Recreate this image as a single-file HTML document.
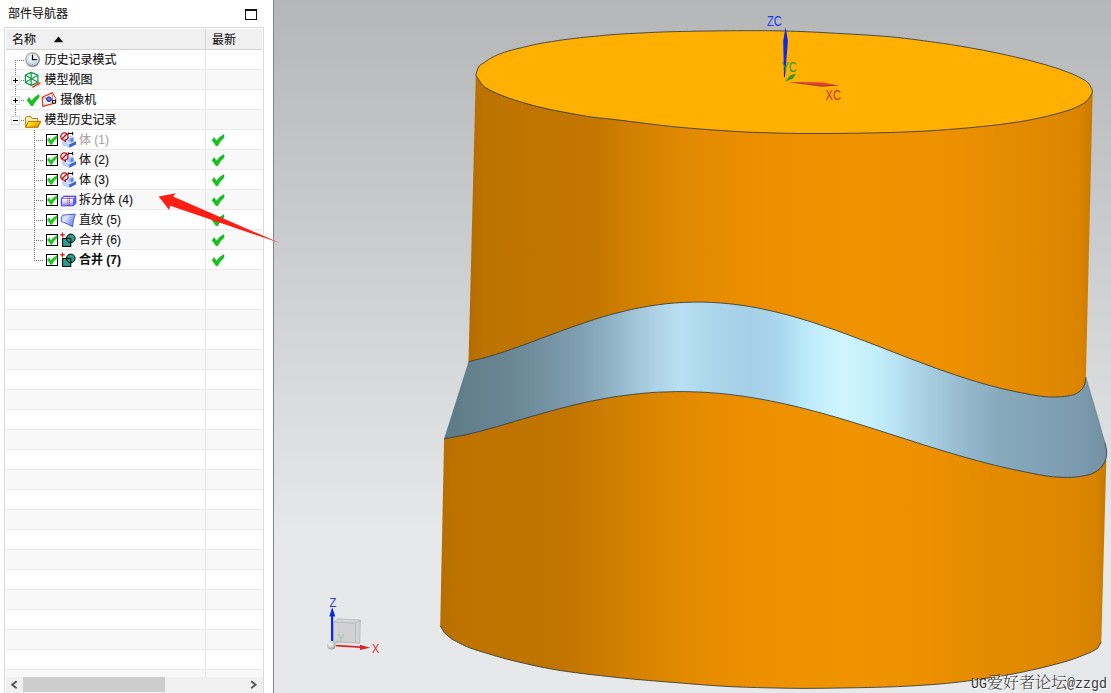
<!DOCTYPE html>
<html lang="zh-CN"><head><meta charset="utf-8"><title>部件导航器</title>
<style>
html,body{margin:0;padding:0;background:#fff;overflow:hidden}
body{width:1111px;height:693px;position:relative;font-family:"Liberation Sans","Noto Sans CJK SC",sans-serif}
svg{position:absolute;left:0;top:0;display:block}
.t{position:absolute;font-size:12px;line-height:17px;height:17px;color:#101010;white-space:nowrap;-webkit-text-stroke:0.1px #101010}
.g{color:#a4a4a4;-webkit-text-stroke-color:#a4a4a4}
.b{font-weight:bold}
.wm{position:absolute;left:971px;top:672.5px;font-family:"Liberation Serif","Noto Serif CJK SC",serif;font-weight:300;font-size:16px;line-height:20px;height:20px;color:#383838;white-space:nowrap;text-shadow:1px 1px 0 #fff}
.wm span{font-family:"Liberation Mono",monospace;font-size:13.33px;font-weight:400;display:inline-block;transform:scaleY(1.12);transform-origin:50% 80%}
</style></head><body>
<svg width="1111" height="693" viewBox="0 0 1111 693">
<rect x="0" y="0" width="273" height="693" fill="#fff"/>
<rect x="273" y="0" width="1" height="693" fill="#7f878e"/>

<defs>
<linearGradient id="bg" x1="0" y1="0" x2="0" y2="1">
<stop offset="0" stop-color="#b5b6b8"/><stop offset="0.78" stop-color="#e7e8ea"/><stop offset="1" stop-color="#e7e8ea"/>
</linearGradient>
<linearGradient id="gU" gradientUnits="userSpaceOnUse" x1="470" y1="0" x2="1093" y2="0"><stop offset="0.0000" stop-color="#b46d00"/><stop offset="0.0241" stop-color="#bd7300"/><stop offset="0.1124" stop-color="#c07500"/><stop offset="0.1990" stop-color="#c37700"/><stop offset="0.2568" stop-color="#d18000"/><stop offset="0.3371" stop-color="#df8800"/><stop offset="0.4286" stop-color="#ea8e00"/><stop offset="0.5297" stop-color="#ee9100"/><stop offset="0.6260" stop-color="#f09300"/><stop offset="0.7865" stop-color="#ec9000"/><stop offset="0.8507" stop-color="#e68c00"/><stop offset="0.9310" stop-color="#e08800"/><stop offset="0.9791" stop-color="#da8400"/><stop offset="0.9984" stop-color="#c87a00"/></linearGradient><linearGradient id="gL" gradientUnits="userSpaceOnUse" x1="440" y1="0" x2="1107" y2="0"><stop offset="0.0015" stop-color="#b66e00"/><stop offset="0.0225" stop-color="#be7300"/><stop offset="0.1874" stop-color="#c17500"/><stop offset="0.2399" stop-color="#cb7c00"/><stop offset="0.3148" stop-color="#da8500"/><stop offset="0.4063" stop-color="#e88d00"/><stop offset="0.5037" stop-color="#ee9100"/><stop offset="0.6147" stop-color="#f09300"/><stop offset="0.7346" stop-color="#ec9000"/><stop offset="0.8171" stop-color="#e48b00"/><stop offset="0.9295" stop-color="#df8800"/><stop offset="0.9820" stop-color="#d88300"/><stop offset="0.9970" stop-color="#c87a00"/></linearGradient><linearGradient id="gB" gradientUnits="userSpaceOnUse" x1="440" y1="0" x2="1111" y2="0"><stop offset="0.0075" stop-color="#5d7986"/><stop offset="0.0447" stop-color="#64808d"/><stop offset="0.1043" stop-color="#6a8694"/><stop offset="0.1565" stop-color="#7492a2"/><stop offset="0.2086" stop-color="#7f9fb2"/><stop offset="0.2683" stop-color="#96b8cb"/><stop offset="0.3130" stop-color="#abcfe2"/><stop offset="0.3577" stop-color="#b9e0f4"/><stop offset="0.4173" stop-color="#aad4ea"/><stop offset="0.4620" stop-color="#a5cfe7"/><stop offset="0.5067" stop-color="#aad6ee"/><stop offset="0.5440" stop-color="#bdeafb"/><stop offset="0.6006" stop-color="#cff6ff"/><stop offset="0.6557" stop-color="#c2ecfa"/><stop offset="0.7004" stop-color="#b0d8ea"/><stop offset="0.7601" stop-color="#9cc2d6"/><stop offset="0.7899" stop-color="#92b6ca"/><stop offset="0.8346" stop-color="#88aabd"/><stop offset="0.8942" stop-color="#81a2b6"/><stop offset="0.9538" stop-color="#7b9aad"/><stop offset="0.9911" stop-color="#7391a3"/></linearGradient>
</defs>
<rect x="274" y="0" width="837" height="693" fill="url(#bg)"/>
<path d="M444.1 438.4L440.2 625.8L444.6 633.1L451.9 639.2C454.3 640.4 462.1 644.6 466.5 646.5 C470.9 648.4 472.5 648.9 478.6 650.8 C484.7 652.7 494.8 655.9 502.9 658.1 C511.0 660.3 519.1 662.2 527.2 664.0 C535.3 665.8 543.4 667.6 551.5 669.1 C559.6 670.6 567.7 671.6 575.8 672.7 C583.9 673.8 592.0 674.7 600.1 675.6 C608.2 676.5 616.3 677.5 624.4 678.3 C632.5 679.1 640.6 679.8 648.7 680.5 C656.8 681.2 665.3 681.8 673.0 682.4 C680.7 683.0 685.8 683.5 695.0 684.2 C704.2 684.9 716.2 685.9 728.0 686.5 C739.8 687.1 753.3 687.5 766.0 687.8 C778.7 688.1 791.3 688.4 804.0 688.4 C816.7 688.4 829.3 688.2 842.0 688.0 C854.7 687.8 870.3 687.5 880.0 687.2 C889.7 687.0 893.5 686.8 900.0 686.5 C906.5 686.2 912.7 685.9 919.0 685.5 C925.3 685.1 931.7 684.7 938.0 684.2 C944.3 683.7 950.7 683.0 957.0 682.3 C963.3 681.6 969.7 680.7 976.0 679.8 C982.3 678.9 988.7 678.0 995.0 677.0 C1001.3 676.0 1007.7 675.0 1014.0 673.8 C1020.3 672.6 1026.7 671.2 1033.0 669.8 C1039.3 668.4 1045.6 666.9 1051.9 665.2 C1058.2 663.6 1064.6 662.0 1070.9 659.9 C1077.2 657.8 1086.7 653.9 1089.9 652.7L1097.5 648.5L1101.3 641.8L1106.3 460.0L1100.0 455.0L1090.0 474.4C1088.4 474.7 1084.3 475.8 1080.6 476.3 C1076.8 476.8 1072.8 477.4 1067.5 477.4 C1062.2 477.4 1054.9 477.0 1048.8 476.3 C1042.7 475.5 1036.9 474.2 1031.0 473.1 C1025.1 472.0 1019.2 470.8 1013.2 469.5 C1007.3 468.2 1001.4 466.8 995.4 465.4 C989.5 463.9 983.6 462.4 977.7 460.8 C971.7 459.2 965.8 457.5 959.9 455.8 C953.9 454.1 948.0 452.3 942.1 450.5 C936.2 448.7 930.2 446.8 924.3 445.0 C918.4 443.1 912.4 441.2 906.5 439.3 C900.6 437.4 894.7 435.5 888.7 433.6 C882.8 431.7 876.9 429.8 870.9 427.9 C865.0 426.0 859.1 424.1 853.2 422.3 C847.2 420.5 841.3 418.7 835.4 417.0 C829.4 415.3 823.5 413.6 817.6 412.0 C811.7 410.4 805.7 408.9 799.8 407.4 C793.9 406.0 787.9 404.6 782.0 403.3 C776.1 402.0 770.2 400.8 764.2 399.7 C758.3 398.6 752.4 397.6 746.4 396.7 C740.5 395.8 734.6 395.0 728.7 394.3 C722.7 393.7 716.8 393.1 710.9 392.7 C705.0 392.3 699.0 391.9 693.1 391.8 C687.2 391.6 681.2 391.5 675.3 391.6 C669.4 391.7 663.5 391.9 657.5 392.2 C651.6 392.5 645.7 393.0 639.7 393.6 C633.8 394.2 627.9 394.9 622.0 395.7 C616.0 396.5 610.1 397.5 604.2 398.6 C598.2 399.7 592.3 400.9 586.4 402.1 C580.5 403.4 574.5 404.8 568.6 406.3 C562.7 407.8 556.7 409.3 550.8 411.0 C544.9 412.6 539.0 414.3 533.0 416.0 C527.1 417.7 521.2 419.5 515.2 421.2 C509.3 423.0 503.4 424.8 497.5 426.5 C491.5 428.1 485.6 429.8 479.7 431.4 C473.7 432.9 467.8 434.4 461.9 435.6 C456.0 436.8 447.1 438.3 444.1 438.8Z" fill="url(#gL)"/>
<path d="M440.2 625.8L444.6 633.1L451.9 639.2C454.3 640.4 462.1 644.6 466.5 646.5 C470.9 648.4 472.5 648.9 478.6 650.8 C484.7 652.7 494.8 655.9 502.9 658.1 C511.0 660.3 519.1 662.2 527.2 664.0 C535.3 665.8 543.4 667.6 551.5 669.1 C559.6 670.6 567.7 671.6 575.8 672.7 C583.9 673.8 592.0 674.7 600.1 675.6 C608.2 676.5 616.3 677.5 624.4 678.3 C632.5 679.1 640.6 679.8 648.7 680.5 C656.8 681.2 665.3 681.8 673.0 682.4 C680.7 683.0 685.8 683.5 695.0 684.2 C704.2 684.9 716.2 685.9 728.0 686.5 C739.8 687.1 753.3 687.5 766.0 687.8 C778.7 688.1 791.3 688.4 804.0 688.4 C816.7 688.4 829.3 688.2 842.0 688.0 C854.7 687.8 870.3 687.5 880.0 687.2 C889.7 687.0 893.5 686.8 900.0 686.5 C906.5 686.2 912.7 685.9 919.0 685.5 C925.3 685.1 931.7 684.7 938.0 684.2 C944.3 683.7 950.7 683.0 957.0 682.3 C963.3 681.6 969.7 680.7 976.0 679.8 C982.3 678.9 988.7 678.0 995.0 677.0 C1001.3 676.0 1007.7 675.0 1014.0 673.8 C1020.3 672.6 1026.7 671.2 1033.0 669.8 C1039.3 668.4 1045.6 666.9 1051.9 665.2 C1058.2 663.6 1064.6 662.0 1070.9 659.9 C1077.2 657.8 1086.7 653.9 1089.9 652.7L1097.5 648.5L1101.3 641.8" fill="none" stroke="#26323c" stroke-width="0.8"/>
<path d="M468.5 361.7C471.5 361.0 480.5 358.9 486.5 357.2 C492.5 355.6 498.5 353.6 504.5 351.6 C510.5 349.6 516.5 347.5 522.5 345.3 C528.6 343.1 534.6 340.8 540.6 338.6 C546.6 336.3 552.6 334.1 558.6 331.9 C564.6 329.7 570.6 327.5 576.6 325.4 C582.6 323.3 588.6 321.3 594.6 319.4 C600.6 317.5 606.6 315.7 612.6 314.1 C618.6 312.5 624.6 311.0 630.6 309.6 C636.6 308.3 642.7 307.1 648.7 306.2 C654.7 305.2 660.7 304.3 666.7 303.7 C672.7 303.1 678.7 302.6 684.7 302.4 C690.7 302.1 696.7 302.0 702.7 302.1 C708.7 302.2 714.7 302.5 720.7 303.0 C726.7 303.4 732.7 304.1 738.7 304.9 C744.7 305.7 750.7 306.7 756.8 307.8 C762.8 309.0 768.8 310.3 774.8 311.7 C780.8 313.1 786.8 314.7 792.8 316.4 C798.8 318.1 804.8 319.9 810.8 321.8 C816.8 323.7 822.8 325.7 828.8 327.8 C834.8 329.9 840.8 332.1 846.8 334.3 C852.8 336.5 858.8 338.8 864.8 341.1 C870.8 343.4 876.9 345.7 882.9 348.0 C888.9 350.4 894.9 352.7 900.9 355.0 C906.9 357.3 912.9 359.7 918.9 361.9 C924.9 364.2 930.9 366.4 936.9 368.6 C942.9 370.7 948.9 372.8 954.9 374.8 C960.9 376.8 966.9 378.8 972.9 380.6 C978.9 382.4 984.9 384.2 991.0 385.8 C997.0 387.4 1003.0 388.9 1009.0 390.2 C1015.0 391.6 1021.0 392.8 1027.0 393.9 C1033.0 395.0 1039.8 396.2 1045.0 396.7 C1050.2 397.2 1053.9 397.1 1058.1 396.9 C1062.3 396.7 1067.0 396.3 1070.3 395.6 C1073.6 394.9 1075.8 394.0 1077.8 392.8 C1079.8 391.6 1081.3 390.1 1082.5 388.5 C1083.7 386.9 1084.3 385.3 1084.9 383.4 C1085.5 381.5 1085.7 378.3 1085.9 377.3C1086.9 380.7 1090.0 391.0 1091.9 397.5 C1093.8 404.0 1095.8 410.4 1097.5 416.3 C1099.2 422.2 1101.0 428.7 1102.2 433.1 C1103.5 437.5 1104.3 439.7 1105.0 442.5 C1105.7 445.3 1106.2 447.8 1106.5 450.0 C1106.8 452.2 1106.8 453.7 1106.5 455.6 C1106.2 457.5 1105.7 459.6 1105.0 461.3 C1104.3 463.0 1103.5 464.3 1102.2 465.9 C1101.0 467.4 1099.5 469.2 1097.5 470.6 C1095.5 472.0 1092.8 473.4 1090.0 474.4 C1087.2 475.3 1084.3 475.8 1080.6 476.3 C1076.8 476.8 1072.8 477.4 1067.5 477.4 C1062.2 477.4 1054.9 477.0 1048.8 476.3 C1042.7 475.5 1036.9 474.2 1031.0 473.1 C1025.1 472.0 1019.2 470.8 1013.2 469.5 C1007.3 468.2 1001.4 466.8 995.4 465.4 C989.5 463.9 983.6 462.4 977.7 460.8 C971.7 459.2 965.8 457.5 959.9 455.8 C953.9 454.1 948.0 452.3 942.1 450.5 C936.2 448.7 930.2 446.8 924.3 445.0 C918.4 443.1 912.4 441.2 906.5 439.3 C900.6 437.4 894.7 435.5 888.7 433.6 C882.8 431.7 876.9 429.8 870.9 427.9 C865.0 426.0 859.1 424.1 853.2 422.3 C847.2 420.5 841.3 418.7 835.4 417.0 C829.4 415.3 823.5 413.6 817.6 412.0 C811.7 410.4 805.7 408.9 799.8 407.4 C793.9 406.0 787.9 404.6 782.0 403.3 C776.1 402.0 770.2 400.8 764.2 399.7 C758.3 398.6 752.4 397.6 746.4 396.7 C740.5 395.8 734.6 395.0 728.7 394.3 C722.7 393.7 716.8 393.1 710.9 392.7 C705.0 392.3 699.0 391.9 693.1 391.8 C687.2 391.6 681.2 391.5 675.3 391.6 C669.4 391.7 663.5 391.9 657.5 392.2 C651.6 392.5 645.7 393.0 639.7 393.6 C633.8 394.2 627.9 394.9 622.0 395.7 C616.0 396.5 610.1 397.5 604.2 398.6 C598.2 399.7 592.3 400.9 586.4 402.1 C580.5 403.4 574.5 404.8 568.6 406.3 C562.7 407.8 556.7 409.3 550.8 411.0 C544.9 412.6 539.0 414.3 533.0 416.0 C527.1 417.7 521.2 419.5 515.2 421.2 C509.3 423.0 503.4 424.8 497.5 426.5 C491.5 428.1 485.6 429.8 479.7 431.4 C473.7 432.9 467.8 434.4 461.9 435.6 C456.0 436.8 447.1 438.3 444.1 438.8Z" fill="url(#gB)"/>
<path d="M444.1 438.8C447.1 438.3 456.0 436.8 461.9 435.6 C467.8 434.4 473.7 432.9 479.7 431.4 C485.6 429.8 491.5 428.1 497.5 426.5 C503.4 424.8 509.3 423.0 515.2 421.2 C521.2 419.5 527.1 417.7 533.0 416.0 C539.0 414.3 544.9 412.6 550.8 411.0 C556.7 409.3 562.7 407.8 568.6 406.3 C574.5 404.8 580.5 403.4 586.4 402.1 C592.3 400.9 598.2 399.7 604.2 398.6 C610.1 397.5 616.0 396.5 622.0 395.7 C627.9 394.9 633.8 394.2 639.7 393.6 C645.7 393.0 651.6 392.5 657.5 392.2 C663.5 391.9 669.4 391.7 675.3 391.6 C681.2 391.5 687.2 391.6 693.1 391.8 C699.0 391.9 705.0 392.3 710.9 392.7 C716.8 393.1 722.7 393.7 728.7 394.3 C734.6 395.0 740.5 395.8 746.4 396.7 C752.4 397.6 758.3 398.6 764.2 399.7 C770.2 400.8 776.1 402.0 782.0 403.3 C787.9 404.6 793.9 406.0 799.8 407.4 C805.7 408.9 811.7 410.4 817.6 412.0 C823.5 413.6 829.4 415.3 835.4 417.0 C841.3 418.7 847.2 420.5 853.2 422.3 C859.1 424.1 865.0 426.0 870.9 427.9 C876.9 429.8 882.8 431.7 888.7 433.6 C894.7 435.5 900.6 437.4 906.5 439.3 C912.4 441.2 918.4 443.1 924.3 445.0 C930.2 446.8 936.2 448.7 942.1 450.5 C948.0 452.3 953.9 454.1 959.9 455.8 C965.8 457.5 971.7 459.2 977.7 460.8 C983.6 462.4 989.5 463.9 995.4 465.4 C1001.4 466.8 1007.3 468.2 1013.2 469.5 C1019.2 470.8 1025.1 472.0 1031.0 473.1 C1036.9 474.2 1042.7 475.5 1048.8 476.3 C1054.9 477.0 1062.2 477.4 1067.5 477.4 C1072.8 477.4 1076.8 476.8 1080.6 476.3 C1084.3 475.8 1087.2 475.3 1090.0 474.4 C1092.8 473.4 1095.5 472.0 1097.5 470.6 C1099.5 469.2 1101.0 467.4 1102.2 465.9 C1103.5 464.3 1104.3 463.0 1105.0 461.3 C1105.7 459.6 1106.2 457.5 1106.5 455.6 C1106.8 453.7 1106.8 452.2 1106.5 450.0 C1106.2 447.8 1105.2 443.8 1105.0 442.5" fill="none" stroke="#26323c" stroke-width="0.8"/>
<path d="M1105.0 442.5C1104.5 440.9 1103.5 437.5 1102.2 433.1 C1101.0 428.7 1099.2 422.2 1097.5 416.3 C1095.8 410.4 1093.8 404.0 1091.9 397.5 C1090.0 391.0 1086.9 380.7 1085.9 377.3" fill="none" stroke="#26323c" stroke-width="0.5" stroke-opacity="0.5"/>
<path d="M475.8 75.2L468.5 361.7C471.5 361.0 480.5 358.9 486.5 357.2 C492.5 355.6 498.5 353.6 504.5 351.6 C510.5 349.6 516.5 347.5 522.5 345.3 C528.6 343.1 534.6 340.8 540.6 338.6 C546.6 336.3 552.6 334.1 558.6 331.9 C564.6 329.7 570.6 327.5 576.6 325.4 C582.6 323.3 588.6 321.3 594.6 319.4 C600.6 317.5 606.6 315.7 612.6 314.1 C618.6 312.5 624.6 311.0 630.6 309.6 C636.6 308.3 642.7 307.1 648.7 306.2 C654.7 305.2 660.7 304.3 666.7 303.7 C672.7 303.1 678.7 302.6 684.7 302.4 C690.7 302.1 696.7 302.0 702.7 302.1 C708.7 302.2 714.7 302.5 720.7 303.0 C726.7 303.4 732.7 304.1 738.7 304.9 C744.7 305.7 750.7 306.7 756.8 307.8 C762.8 309.0 768.8 310.3 774.8 311.7 C780.8 313.1 786.8 314.7 792.8 316.4 C798.8 318.1 804.8 319.9 810.8 321.8 C816.8 323.7 822.8 325.7 828.8 327.8 C834.8 329.9 840.8 332.1 846.8 334.3 C852.8 336.5 858.8 338.8 864.8 341.1 C870.8 343.4 876.9 345.7 882.9 348.0 C888.9 350.4 894.9 352.7 900.9 355.0 C906.9 357.3 912.9 359.7 918.9 361.9 C924.9 364.2 930.9 366.4 936.9 368.6 C942.9 370.7 948.9 372.8 954.9 374.8 C960.9 376.8 966.9 378.8 972.9 380.6 C978.9 382.4 984.9 384.2 991.0 385.8 C997.0 387.4 1003.0 388.9 1009.0 390.2 C1015.0 391.6 1021.0 392.8 1027.0 393.9 C1033.0 395.0 1039.8 396.2 1045.0 396.7 C1050.2 397.2 1053.9 397.1 1058.1 396.9 C1062.3 396.7 1067.0 396.3 1070.3 395.6 C1073.6 394.9 1075.8 394.0 1077.8 392.8 C1079.8 391.6 1081.3 390.1 1082.5 388.5 C1083.7 386.9 1084.3 385.3 1084.9 383.4 C1085.5 381.5 1085.7 378.3 1085.9 377.3L1092.7 91.8L780.0 80.0Z" fill="url(#gU)"/>
<path d="M468.5 361.7C471.5 361.0 480.5 358.9 486.5 357.2 C492.5 355.6 498.5 353.6 504.5 351.6 C510.5 349.6 516.5 347.5 522.5 345.3 C528.6 343.1 534.6 340.8 540.6 338.6 C546.6 336.3 552.6 334.1 558.6 331.9 C564.6 329.7 570.6 327.5 576.6 325.4 C582.6 323.3 588.6 321.3 594.6 319.4 C600.6 317.5 606.6 315.7 612.6 314.1 C618.6 312.5 624.6 311.0 630.6 309.6 C636.6 308.3 642.7 307.1 648.7 306.2 C654.7 305.2 660.7 304.3 666.7 303.7 C672.7 303.1 678.7 302.6 684.7 302.4 C690.7 302.1 696.7 302.0 702.7 302.1 C708.7 302.2 714.7 302.5 720.7 303.0 C726.7 303.4 732.7 304.1 738.7 304.9 C744.7 305.7 750.7 306.7 756.8 307.8 C762.8 309.0 768.8 310.3 774.8 311.7 C780.8 313.1 786.8 314.7 792.8 316.4 C798.8 318.1 804.8 319.9 810.8 321.8 C816.8 323.7 822.8 325.7 828.8 327.8 C834.8 329.9 840.8 332.1 846.8 334.3 C852.8 336.5 858.8 338.8 864.8 341.1 C870.8 343.4 876.9 345.7 882.9 348.0 C888.9 350.4 894.9 352.7 900.9 355.0 C906.9 357.3 912.9 359.7 918.9 361.9 C924.9 364.2 930.9 366.4 936.9 368.6 C942.9 370.7 948.9 372.8 954.9 374.8 C960.9 376.8 966.9 378.8 972.9 380.6 C978.9 382.4 984.9 384.2 991.0 385.8 C997.0 387.4 1003.0 388.9 1009.0 390.2 C1015.0 391.6 1021.0 392.8 1027.0 393.9 C1033.0 395.0 1039.8 396.2 1045.0 396.7 C1050.2 397.2 1053.9 397.1 1058.1 396.9 C1062.3 396.7 1067.0 396.3 1070.3 395.6 C1073.6 394.9 1075.8 394.0 1077.8 392.8 C1079.8 391.6 1081.3 390.1 1082.5 388.5 C1083.7 386.9 1084.3 385.3 1084.9 383.4 C1085.5 381.5 1085.7 378.3 1085.9 377.3" fill="none" stroke="#26323c" stroke-width="0.8"/>
<path d="M475.8 75.2C476.3 73.8 477.4 68.9 478.7 66.8 C480.0 64.7 481.3 64.5 483.8 62.8 C486.3 61.1 489.8 58.5 493.9 56.5 C498.0 54.5 503.5 52.5 508.3 51.0 C513.1 49.5 517.9 48.6 522.7 47.4 C527.5 46.2 532.4 45.0 537.2 44.0 C542.0 43.0 546.8 42.4 551.6 41.6 C556.4 40.8 561.2 40.0 566.0 39.4 C570.8 38.8 575.6 38.2 580.4 37.7 C585.2 37.2 589.1 36.8 594.9 36.3 C600.7 35.8 606.6 35.0 615.0 34.4 C623.4 33.8 634.8 33.3 645.0 32.8 C655.2 32.3 660.8 32.0 676.2 31.6 C691.6 31.2 719.3 30.8 737.4 30.7 C755.5 30.6 769.5 30.6 784.8 31.0 C800.1 31.4 811.6 31.9 829.2 32.9 C846.8 33.9 871.9 35.1 890.4 36.8 C908.9 38.5 929.3 41.6 940.0 43.0 C950.7 44.4 949.6 44.4 954.4 45.2 C959.2 46.0 964.1 46.8 968.9 47.6 C973.7 48.4 978.5 49.3 983.3 50.2 C988.1 51.1 992.9 52.1 997.7 53.1 C1002.5 54.1 1007.4 55.2 1012.2 56.3 C1017.0 57.4 1021.8 58.4 1026.6 59.6 C1031.4 60.8 1036.2 62.1 1041.0 63.5 C1045.8 64.9 1050.6 66.2 1055.4 67.8 C1060.2 69.4 1066.1 71.5 1069.9 73.0 C1073.8 74.5 1075.6 75.4 1078.5 76.9 C1081.4 78.4 1085.2 80.2 1087.2 81.9 C1089.2 83.6 1089.9 85.3 1090.8 87.0 C1091.7 88.7 1092.4 91.0 1092.7 91.8C1092.2 92.8 1090.8 95.9 1089.4 97.8 C1088.0 99.7 1086.3 101.4 1084.3 102.9 C1082.2 104.4 1079.5 105.7 1077.1 106.8 C1074.7 107.9 1073.5 108.6 1069.9 109.8 C1066.3 111.0 1060.2 112.8 1055.4 114.1 C1050.6 115.4 1045.8 116.5 1041.0 117.6 C1036.2 118.7 1031.4 119.7 1026.6 120.6 C1021.8 121.5 1017.0 122.1 1012.2 122.8 C1007.4 123.5 1002.5 124.2 997.7 124.8 C992.9 125.4 988.1 125.9 983.3 126.4 C978.5 126.9 973.7 127.4 968.9 127.8 C964.1 128.2 959.2 128.6 954.4 129.0 C949.6 129.4 945.6 129.7 940.0 130.1 C934.4 130.5 929.3 130.9 921.0 131.3 C912.7 131.7 900.6 132.2 890.4 132.5 C880.2 132.8 870.0 133.0 859.8 133.2 C849.6 133.4 839.4 133.4 829.2 133.5 C819.0 133.6 808.8 133.6 798.6 133.5 C788.4 133.4 778.2 133.1 768.0 132.8 C757.8 132.5 747.6 132.2 737.4 131.6 C727.2 131.0 717.0 130.3 706.8 129.5 C696.6 128.7 686.4 128.0 676.2 127.0 C666.0 126.0 655.8 124.6 645.6 123.4 C635.4 122.2 623.5 120.6 615.0 119.6 C606.5 118.6 600.7 118.1 594.9 117.4 C589.1 116.7 585.2 116.0 580.4 115.2 C575.6 114.4 570.8 113.5 566.0 112.6 C561.2 111.7 556.4 110.8 551.6 109.8 C546.8 108.8 542.0 107.7 537.2 106.5 C532.4 105.3 527.5 103.9 522.7 102.5 C517.9 101.1 513.1 99.6 508.3 97.9 C503.5 96.2 498.0 94.0 493.9 92.1 C489.8 90.2 486.2 88.2 483.8 86.3 C481.4 84.4 480.7 82.4 479.4 80.6 C478.1 78.8 476.4 76.1 475.8 75.2Z" fill="#ffb000" stroke="#26323c" stroke-width="0.8"/>


<g font-family="'Liberation Sans',sans-serif" font-size="14">
<path d="M785.6 26.9 L787.9 41 L785 77.2 L784 77.2 L783.2 41 Z" fill="#0a28f0"/>
<path d="M785 81.7 L790 75.5 L796 73.6 L793 78.5 Z" fill="#2a9a2a"/>
<path d="M788.4 82.2 L820 83 L839.2 85.6 L822 86.8 Z" fill="#8a4a30"/>
<path d="M788.4 82 L822 82.6 L839.2 85.4 L820 85.4 Z" fill="#e83a3a"/>
<text x="767" y="25.8" fill="#1c3cf0" textLength="15" lengthAdjust="spacingAndGlyphs">ZC</text>
<text x="781.4" y="71.8" fill="#2a9a2a" textLength="15.4" lengthAdjust="spacingAndGlyphs">YC</text>
<text x="825.5" y="99.8" fill="#d03030" textLength="15.4" lengthAdjust="spacingAndGlyphs">XC</text>
</g>


<defs><radialGradient id="sph" cx="0.4" cy="0.35" r="0.7"><stop offset="0" stop-color="#ffffff"/><stop offset="0.6" stop-color="#c8c8c8"/><stop offset="1" stop-color="#8a8a8a"/></radialGradient></defs>
<g font-family="'Liberation Sans',sans-serif" font-size="12.3">
<path d="M337.1 619 L360.2 620.2 L359.6 643.3 L337.1 641" fill="#cfd0d1" fill-opacity="0.5" stroke="#bcbdbe" stroke-width="0.7"/>
<path d="M333.7 621.9 L355.6 623 L355.6 642.7 L333.7 642.7 Z" fill="#c9cacb" fill-opacity="0.6" stroke="#b6b7b8" stroke-width="0.8"/>
<path d="M333.7 621.9 L337.1 619 L360.2 620.2 L355.6 623 Z" fill="#d6d7d8" fill-opacity="0.7" stroke="#b9babb" stroke-width="0.8"/>
<path d="M355.6 623 L360.2 620.2 L359.6 643.3 L355.6 642.7 Z" fill="#cfd0d1" fill-opacity="0.7" stroke="#b9babb" stroke-width="0.8"/>
<text x="337.6" y="642" fill="#9cc8a2" font-size="10">Y</text>
<path d="M334 643.6 L338.4 640.4" stroke="#9cc8a2" stroke-width="1.2"/>
<rect x="331" y="615" width="2.2" height="27" fill="#0a28e8"/>
<path d="M332.2 607.2 L335.3 616.4 L329.3 616.4 Z" fill="#0a28e8"/>
<path d="M336 644.7 L361 646.3 L361 648 L336 646.4 Z" fill="#d62828"/>
<path d="M360 644.8 L370.2 647.8 L360 650 Z" fill="#d62828"/>
<circle cx="331.3" cy="645.2" r="4.4" fill="url(#sph)"/>
<text x="329.4" y="606.7" fill="#1c3cf0" textLength="6.8" lengthAdjust="spacingAndGlyphs">Z</text>
<text x="371.9" y="653" fill="#d03030" textLength="7.2" lengthAdjust="spacingAndGlyphs">X</text>
</g>

<g shape-rendering="crispEdges"><rect x="6" y="50" width="256" height="19" fill="#ffffff"/><rect x="6" y="69" width="256" height="1" fill="#e9e9e9"/><rect x="6" y="70" width="256" height="19" fill="#f8f8f8"/><rect x="6" y="89" width="256" height="1" fill="#e9e9e9"/><rect x="6" y="90" width="256" height="19" fill="#ffffff"/><rect x="6" y="109" width="256" height="1" fill="#e9e9e9"/><rect x="6" y="110" width="256" height="19" fill="#f8f8f8"/><rect x="6" y="129" width="256" height="1" fill="#e9e9e9"/><rect x="6" y="130" width="256" height="19" fill="#ffffff"/><rect x="6" y="149" width="256" height="1" fill="#e9e9e9"/><rect x="6" y="150" width="256" height="19" fill="#f8f8f8"/><rect x="6" y="169" width="256" height="1" fill="#e9e9e9"/><rect x="6" y="170" width="256" height="19" fill="#ffffff"/><rect x="6" y="189" width="256" height="1" fill="#e9e9e9"/><rect x="6" y="190" width="256" height="19" fill="#f8f8f8"/><rect x="6" y="209" width="256" height="1" fill="#e9e9e9"/><rect x="6" y="210" width="256" height="19" fill="#ffffff"/><rect x="6" y="229" width="256" height="1" fill="#e9e9e9"/><rect x="6" y="230" width="256" height="19" fill="#f8f8f8"/><rect x="6" y="249" width="256" height="1" fill="#e9e9e9"/><rect x="6" y="250" width="256" height="19" fill="#ffffff"/><rect x="6" y="269" width="256" height="1" fill="#e9e9e9"/><rect x="6" y="270" width="256" height="19" fill="#f8f8f8"/><rect x="6" y="289" width="256" height="1" fill="#e9e9e9"/><rect x="6" y="290" width="256" height="19" fill="#ffffff"/><rect x="6" y="309" width="256" height="1" fill="#e9e9e9"/><rect x="6" y="310" width="256" height="19" fill="#f8f8f8"/><rect x="6" y="329" width="256" height="1" fill="#e9e9e9"/><rect x="6" y="330" width="256" height="19" fill="#ffffff"/><rect x="6" y="349" width="256" height="1" fill="#e9e9e9"/><rect x="6" y="350" width="256" height="19" fill="#f8f8f8"/><rect x="6" y="369" width="256" height="1" fill="#e9e9e9"/><rect x="6" y="370" width="256" height="19" fill="#ffffff"/><rect x="6" y="389" width="256" height="1" fill="#e9e9e9"/><rect x="6" y="390" width="256" height="19" fill="#f8f8f8"/><rect x="6" y="409" width="256" height="1" fill="#e9e9e9"/><rect x="6" y="410" width="256" height="19" fill="#ffffff"/><rect x="6" y="429" width="256" height="1" fill="#e9e9e9"/><rect x="6" y="430" width="256" height="19" fill="#f8f8f8"/><rect x="6" y="449" width="256" height="1" fill="#e9e9e9"/><rect x="6" y="450" width="256" height="19" fill="#ffffff"/><rect x="6" y="469" width="256" height="1" fill="#e9e9e9"/><rect x="6" y="470" width="256" height="19" fill="#f8f8f8"/><rect x="6" y="489" width="256" height="1" fill="#e9e9e9"/><rect x="6" y="490" width="256" height="19" fill="#ffffff"/><rect x="6" y="509" width="256" height="1" fill="#e9e9e9"/><rect x="6" y="510" width="256" height="19" fill="#f8f8f8"/><rect x="6" y="529" width="256" height="1" fill="#e9e9e9"/><rect x="6" y="530" width="256" height="19" fill="#ffffff"/><rect x="6" y="549" width="256" height="1" fill="#e9e9e9"/><rect x="6" y="550" width="256" height="19" fill="#f8f8f8"/><rect x="6" y="569" width="256" height="1" fill="#e9e9e9"/><rect x="6" y="570" width="256" height="19" fill="#ffffff"/><rect x="6" y="589" width="256" height="1" fill="#e9e9e9"/><rect x="6" y="590" width="256" height="19" fill="#f8f8f8"/><rect x="6" y="609" width="256" height="1" fill="#e9e9e9"/><rect x="6" y="610" width="256" height="19" fill="#ffffff"/><rect x="6" y="629" width="256" height="1" fill="#e9e9e9"/><rect x="6" y="630" width="256" height="19" fill="#f8f8f8"/><rect x="6" y="649" width="256" height="1" fill="#e9e9e9"/><rect x="6" y="650" width="256" height="19" fill="#ffffff"/><rect x="6" y="669" width="256" height="1" fill="#e9e9e9"/><rect x="6" y="670" width="256" height="7" fill="#f8f8f8"/><rect x="205" y="50" width="1" height="627" fill="#e6e6e6"/><rect x="6" y="29" width="256" height="20" fill="#f0f0f0"/><rect x="6" y="49" width="256" height="1" fill="#d4d4d4"/><rect x="205" y="29" width="1" height="20" fill="#d2d2d2"/><rect x="4" y="27" width="260" height="1" fill="#d9d9d9"/><rect x="4" y="27" width="1" height="666" fill="#d9d9d9"/><rect x="263" y="27" width="1" height="666" fill="#d9d9d9"/><rect x="245" y="9" width="12" height="2" fill="#111"/><rect x="245" y="9" width="1" height="11" fill="#111"/><rect x="256" y="9" width="1" height="11" fill="#111"/><rect x="245" y="19" width="12" height="1" fill="#111"/><g stroke="#777" stroke-width="1" stroke-dasharray="1 1" fill="none"><path d="M15.5 60 V76"/><path d="M15.5 86 V96"/><path d="M15.5 106 V116"/><path d="M17 60.5 H24"/><path d="M21 80.5 H24"/><path d="M21 100.5 H24"/><path d="M21 120.5 H24"/><path d="M34.5 130 V261"/><path d="M36 140.5 H43"/><path d="M36 160.5 H43"/><path d="M36 180.5 H43"/><path d="M36 200.5 H43"/><path d="M36 220.5 H43"/><path d="M36 240.5 H43"/><path d="M36 260.5 H43"/></g><rect x="11" y="76" width="9" height="9" fill="#dadada"/><rect x="12" y="77" width="7" height="7" fill="#fff"/><rect x="13" y="80" width="5" height="1" fill="#000"/><rect x="15" y="78" width="1" height="5" fill="#000"/><rect x="11" y="96" width="9" height="9" fill="#dadada"/><rect x="12" y="97" width="7" height="7" fill="#fff"/><rect x="13" y="100" width="5" height="1" fill="#000"/><rect x="15" y="98" width="1" height="5" fill="#000"/><rect x="11" y="116" width="9" height="9" fill="#dadada"/><rect x="12" y="117" width="7" height="7" fill="#fff"/><rect x="13" y="120" width="5" height="1" fill="#000"/><rect x="46" y="134" width="12" height="12" fill="#000"/><rect x="47" y="135" width="10" height="10" fill="#fff"/><rect x="46" y="154" width="12" height="12" fill="#000"/><rect x="47" y="155" width="10" height="10" fill="#fff"/><rect x="46" y="174" width="12" height="12" fill="#000"/><rect x="47" y="175" width="10" height="10" fill="#fff"/><rect x="46" y="194" width="12" height="12" fill="#000"/><rect x="47" y="195" width="10" height="10" fill="#fff"/><rect x="46" y="214" width="12" height="12" fill="#000"/><rect x="47" y="215" width="10" height="10" fill="#fff"/><rect x="46" y="234" width="12" height="12" fill="#000"/><rect x="47" y="235" width="10" height="10" fill="#fff"/><rect x="46" y="254" width="12" height="12" fill="#000"/><rect x="47" y="255" width="10" height="10" fill="#fff"/></g><path d="M53.8 42.2 L58.5 36.4 L63.2 42.2 Z" fill="#111"/><defs><linearGradient id="clk" x1="0" y1="0" x2="0" y2="1"><stop offset="0" stop-color="#ffffff"/><stop offset="0.45" stop-color="#f4f8fd"/><stop offset="1" stop-color="#bcd3f0"/></linearGradient>
<linearGradient id="clkr" x1="0" y1="0" x2="1" y2="1"><stop offset="0" stop-color="#c8c8c8"/><stop offset="1" stop-color="#7c7c7c"/></linearGradient></defs>
<circle cx="32.5" cy="59.6" r="7.5" fill="url(#clkr)"/>
<circle cx="32.5" cy="59.6" r="5.9" fill="url(#clk)"/>
<g fill="#444"><circle cx="32.5" cy="54.8" r="0.45"/><circle cx="32.5" cy="64.4" r="0.45"/><circle cx="27.7" cy="59.6" r="0.45"/><circle cx="37.3" cy="59.6" r="0.45"/>
<circle cx="30.1" cy="55.4" r="0.35"/><circle cx="34.9" cy="55.4" r="0.35"/><circle cx="28.3" cy="57.2" r="0.35"/><circle cx="36.7" cy="57.2" r="0.35"/>
<circle cx="28.3" cy="62" r="0.35"/><circle cx="36.7" cy="62" r="0.35"/><circle cx="30.1" cy="63.8" r="0.35"/><circle cx="34.9" cy="63.8" r="0.35"/></g>
<path d="M32.5 54.8 V59.6 H36.8" fill="none" stroke="#000" stroke-width="1.25"/><g fill="none" stroke="#159e4c" stroke-width="1.3" stroke-linejoin="round">
<path d="M31.1 72.4 L37.9 75.2 V82.3 L31.1 85.3 L25.4 82.3 V75.2 Z"/><path d="M31.1 72.4 V85.3"/><path d="M25.4 75.2 L37.9 82.3"/><path d="M37.9 75.2 L25.4 82.3"/></g>
<path d="M32.4 87.4 L38.6 83.6" stroke="#f0301c" stroke-width="1.5" fill="none"/><path d="M41 82.2 L36.6 82.6 L38.8 85.8 Z" fill="#f4501c"/><path transform="translate(27,94.6) scale(1.008,1.000)" d="M0 5.8 L2.1 2.9 L4.4 6.4 Q7.5 2 11.9 0 L12.1 2.9 Q8 6 5.6 11.3 L3.8 11 Q2.4 8 0 5.8 Z" fill="#14c41c" stroke="#0fa818" stroke-width="0.5" stroke-linejoin="round"/><path d="M42.2 97.2 L52.4 92.6 L53 103.6 L42.8 106.4 Z" fill="#dff2f2" stroke="#e8341a" stroke-width="1.2" stroke-linejoin="round"/>
<path d="M52.4 92.6 L55.8 98.4 L55.6 102.6 L53 103.6" fill="#eef8f8" stroke="#e8341a" stroke-width="1" stroke-linejoin="round"/>
<path d="M42.2 97.2 L49 99.6 L55.6 102.4" fill="none" stroke="#e8341a" stroke-width="0.7"/>
<circle cx="49" cy="99.2" r="2.3" fill="#6a78e8" stroke="#1a22a8" stroke-width="1"/>
<path d="M52.6 100.4 H55.6 V103.2 H52.6 Z" fill="#fff" stroke="#000" stroke-width="1"/><defs><linearGradient id="fld" x1="0" y1="0" x2="1" y2="0.6"><stop offset="0" stop-color="#fff27a"/><stop offset="0.45" stop-color="#ffd400"/><stop offset="1" stop-color="#e08a00"/></linearGradient></defs>
<path d="M25.6 127 V117.6 L26.6 116.6 H31 L32.2 118.5 H37.6 L38 121.4" fill="#fff3ae" stroke="#b07a12" stroke-width="1" stroke-linejoin="round"/>
<path d="M25.6 127.3 L28.4 121.4 H40.8 L37.9 127.3 Z" fill="url(#fld)" stroke="#a8720c" stroke-width="1" stroke-linejoin="round"/><path transform="translate(47.3,135.4) scale(0.818,0.814)" d="M0 5.8 L2.1 2.9 L4.4 6.4 Q7.5 2 11.9 0 L12.1 2.9 Q8 6 5.6 11.3 L3.8 11 Q2.4 8 0 5.8 Z" fill="#18c818" stroke="#18c818" stroke-width="0.5" stroke-linejoin="round"/><path transform="translate(212,134.6) scale(1.000,1.000)" d="M0 5.8 L2.1 2.9 L4.4 6.4 Q7.5 2 11.9 0 L12.1 2.9 Q8 6 5.6 11.3 L3.8 11 Q2.4 8 0 5.8 Z" fill="#14c41c" stroke="#0fa818" stroke-width="0.5" stroke-linejoin="round"/><path transform="translate(47.3,155.4) scale(0.818,0.814)" d="M0 5.8 L2.1 2.9 L4.4 6.4 Q7.5 2 11.9 0 L12.1 2.9 Q8 6 5.6 11.3 L3.8 11 Q2.4 8 0 5.8 Z" fill="#18c818" stroke="#18c818" stroke-width="0.5" stroke-linejoin="round"/><path transform="translate(212,154.6) scale(1.000,1.000)" d="M0 5.8 L2.1 2.9 L4.4 6.4 Q7.5 2 11.9 0 L12.1 2.9 Q8 6 5.6 11.3 L3.8 11 Q2.4 8 0 5.8 Z" fill="#14c41c" stroke="#0fa818" stroke-width="0.5" stroke-linejoin="round"/><path transform="translate(47.3,175.4) scale(0.818,0.814)" d="M0 5.8 L2.1 2.9 L4.4 6.4 Q7.5 2 11.9 0 L12.1 2.9 Q8 6 5.6 11.3 L3.8 11 Q2.4 8 0 5.8 Z" fill="#18c818" stroke="#18c818" stroke-width="0.5" stroke-linejoin="round"/><path transform="translate(212,174.6) scale(1.000,1.000)" d="M0 5.8 L2.1 2.9 L4.4 6.4 Q7.5 2 11.9 0 L12.1 2.9 Q8 6 5.6 11.3 L3.8 11 Q2.4 8 0 5.8 Z" fill="#14c41c" stroke="#0fa818" stroke-width="0.5" stroke-linejoin="round"/><path transform="translate(47.3,195.4) scale(0.818,0.814)" d="M0 5.8 L2.1 2.9 L4.4 6.4 Q7.5 2 11.9 0 L12.1 2.9 Q8 6 5.6 11.3 L3.8 11 Q2.4 8 0 5.8 Z" fill="#18c818" stroke="#18c818" stroke-width="0.5" stroke-linejoin="round"/><path transform="translate(212,194.6) scale(1.000,1.000)" d="M0 5.8 L2.1 2.9 L4.4 6.4 Q7.5 2 11.9 0 L12.1 2.9 Q8 6 5.6 11.3 L3.8 11 Q2.4 8 0 5.8 Z" fill="#14c41c" stroke="#0fa818" stroke-width="0.5" stroke-linejoin="round"/><path transform="translate(47.3,215.4) scale(0.818,0.814)" d="M0 5.8 L2.1 2.9 L4.4 6.4 Q7.5 2 11.9 0 L12.1 2.9 Q8 6 5.6 11.3 L3.8 11 Q2.4 8 0 5.8 Z" fill="#18c818" stroke="#18c818" stroke-width="0.5" stroke-linejoin="round"/><path transform="translate(212,214.6) scale(1.000,1.000)" d="M0 5.8 L2.1 2.9 L4.4 6.4 Q7.5 2 11.9 0 L12.1 2.9 Q8 6 5.6 11.3 L3.8 11 Q2.4 8 0 5.8 Z" fill="#14c41c" stroke="#0fa818" stroke-width="0.5" stroke-linejoin="round"/><path transform="translate(47.3,235.4) scale(0.818,0.814)" d="M0 5.8 L2.1 2.9 L4.4 6.4 Q7.5 2 11.9 0 L12.1 2.9 Q8 6 5.6 11.3 L3.8 11 Q2.4 8 0 5.8 Z" fill="#18c818" stroke="#18c818" stroke-width="0.5" stroke-linejoin="round"/><path transform="translate(212,234.6) scale(1.000,1.000)" d="M0 5.8 L2.1 2.9 L4.4 6.4 Q7.5 2 11.9 0 L12.1 2.9 Q8 6 5.6 11.3 L3.8 11 Q2.4 8 0 5.8 Z" fill="#14c41c" stroke="#0fa818" stroke-width="0.5" stroke-linejoin="round"/><path transform="translate(47.3,255.4) scale(0.818,0.814)" d="M0 5.8 L2.1 2.9 L4.4 6.4 Q7.5 2 11.9 0 L12.1 2.9 Q8 6 5.6 11.3 L3.8 11 Q2.4 8 0 5.8 Z" fill="#18c818" stroke="#18c818" stroke-width="0.5" stroke-linejoin="round"/><path transform="translate(212,254.6) scale(1.000,1.000)" d="M0 5.8 L2.1 2.9 L4.4 6.4 Q7.5 2 11.9 0 L12.1 2.9 Q8 6 5.6 11.3 L3.8 11 Q2.4 8 0 5.8 Z" fill="#14c41c" stroke="#0fa818" stroke-width="0.5" stroke-linejoin="round"/><g transform="translate(0,0)">
<path d="M68.2 133.5 H72.8 M72.7 131.9 V135.2 M68.3 132.4 V134.6" stroke="#000" stroke-width="1" fill="none"/>
<path d="M62 141.8 L69 138.6 L76 141.4 L76 144.2 L69.6 147.6 L62 144.8 Z" fill="#4a6ee6"/>
<path d="M62 141.8 L69 138.8 L76 141.4 L69.4 144.6 Z" fill="#dfe9ff"/>
<path d="M62 141.8 L69.4 144.6 V147.6 L62 144.8 Z" fill="#c4d6fb"/>
<path d="M69.4 144.6 L76 141.4 V144.2 L69.6 147.6 Z" fill="#3e60de"/>
<path d="M67.8 137.4 L71 136.2 L73.6 137.2 V141.2 L70.6 142.6 L67.8 141.4 Z" fill="#5d86ea"/>
<path d="M67.8 137.4 L71 136.2 L73.6 137.2 L70.6 138.6 Z" fill="#cfe0ff"/>
<path d="M67.8 137.4 L70.6 138.6 V142.6 L67.8 141.4 Z" fill="#a9c4f8"/>
<path d="M64.6 138.4 H67.2 M65.2 138 V142" stroke="#000" stroke-width="1.1" fill="none"/>
<circle cx="64.4" cy="136.5" r="3.6" fill="#fff" fill-opacity="0.9" stroke="#cc1018" stroke-width="1.4"/>
<path d="M61.9 139 L66.9 134" stroke="#cc1018" stroke-width="1.6"/>
</g><g transform="translate(0,20)">
<path d="M68.2 133.5 H72.8 M72.7 131.9 V135.2 M68.3 132.4 V134.6" stroke="#000" stroke-width="1" fill="none"/>
<path d="M62 141.8 L69 138.6 L76 141.4 L76 144.2 L69.6 147.6 L62 144.8 Z" fill="#4a6ee6"/>
<path d="M62 141.8 L69 138.8 L76 141.4 L69.4 144.6 Z" fill="#dfe9ff"/>
<path d="M62 141.8 L69.4 144.6 V147.6 L62 144.8 Z" fill="#c4d6fb"/>
<path d="M69.4 144.6 L76 141.4 V144.2 L69.6 147.6 Z" fill="#3e60de"/>
<path d="M67.8 137.4 L71 136.2 L73.6 137.2 V141.2 L70.6 142.6 L67.8 141.4 Z" fill="#5d86ea"/>
<path d="M67.8 137.4 L71 136.2 L73.6 137.2 L70.6 138.6 Z" fill="#cfe0ff"/>
<path d="M67.8 137.4 L70.6 138.6 V142.6 L67.8 141.4 Z" fill="#a9c4f8"/>
<path d="M64.6 138.4 H67.2 M65.2 138 V142" stroke="#000" stroke-width="1.1" fill="none"/>
<circle cx="64.4" cy="136.5" r="3.6" fill="#fff" fill-opacity="0.9" stroke="#cc1018" stroke-width="1.4"/>
<path d="M61.9 139 L66.9 134" stroke="#cc1018" stroke-width="1.6"/>
</g><g transform="translate(0,40)">
<path d="M68.2 133.5 H72.8 M72.7 131.9 V135.2 M68.3 132.4 V134.6" stroke="#000" stroke-width="1" fill="none"/>
<path d="M62 141.8 L69 138.6 L76 141.4 L76 144.2 L69.6 147.6 L62 144.8 Z" fill="#4a6ee6"/>
<path d="M62 141.8 L69 138.8 L76 141.4 L69.4 144.6 Z" fill="#dfe9ff"/>
<path d="M62 141.8 L69.4 144.6 V147.6 L62 144.8 Z" fill="#c4d6fb"/>
<path d="M69.4 144.6 L76 141.4 V144.2 L69.6 147.6 Z" fill="#3e60de"/>
<path d="M67.8 137.4 L71 136.2 L73.6 137.2 V141.2 L70.6 142.6 L67.8 141.4 Z" fill="#5d86ea"/>
<path d="M67.8 137.4 L71 136.2 L73.6 137.2 L70.6 138.6 Z" fill="#cfe0ff"/>
<path d="M67.8 137.4 L70.6 138.6 V142.6 L67.8 141.4 Z" fill="#a9c4f8"/>
<path d="M64.6 138.4 H67.2 M65.2 138 V142" stroke="#000" stroke-width="1.1" fill="none"/>
<circle cx="64.4" cy="136.5" r="3.6" fill="#fff" fill-opacity="0.9" stroke="#cc1018" stroke-width="1.4"/>
<path d="M61.9 139 L66.9 134" stroke="#cc1018" stroke-width="1.6"/>
</g><defs><linearGradient id="spl" x1="0" y1="0" x2="0" y2="1"><stop offset="0" stop-color="#ffffff"/><stop offset="1" stop-color="#8c9cff"/></linearGradient></defs>
<path d="M61.3 198.6 L63.6 196.2 H75.8 V203.4 L73.4 205.8 H61.3 Z" fill="#5565f2" stroke="#3a3cf0" stroke-width="1" stroke-linejoin="round"/>
<path d="M62 199 H73 V205.2 H62 Z" fill="url(#spl)"/>
<path d="M62.4 198.2 L64 196.9 H75 L73.4 198.2 Z" fill="#e8ecff"/>
<path d="M67.8 196.2 V205.8 M69.5 196.2 V205.8" stroke="#e81c1c" stroke-width="0.9" stroke-dasharray="1.2 0.8"/><defs><linearGradient id="rul" x1="0" y1="0" x2="1" y2="0.5"><stop offset="0" stop-color="#b4c0ff"/><stop offset="0.35" stop-color="#e2e8ff"/><stop offset="1" stop-color="#6f80f0"/></linearGradient></defs>
<path d="M62.6 215.2 C66.6 214.6 71.2 214.2 75.4 214.2 C73.8 218.2 72.8 222.4 72.8 226.8 C69.4 224.8 65 222.8 61.3 221.4 C61 219 61.4 216.8 62.6 215.2 Z" fill="url(#rul)" stroke="#4c5ce6" stroke-width="1" stroke-linejoin="round"/><g transform="translate(0,0)">
<path d="M60.2 234.8 H64.8 M62.5 232.4 V237.2" stroke="#e01010" stroke-width="1.2"/>
<rect x="62.6" y="238.4" width="8.2" height="8" fill="#2a9d8f" stroke="#000" stroke-width="1"/>
<circle cx="70.8" cy="238.4" r="4.3" fill="#2a9d8f" stroke="#000" stroke-width="1"/>
<path d="M66.6 238.4 H70.8 V242.6" fill="none" stroke="#000" stroke-width="1"/>
</g><g transform="translate(0,20)">
<path d="M60.2 234.8 H64.8 M62.5 232.4 V237.2" stroke="#e01010" stroke-width="1.2"/>
<rect x="62.6" y="238.4" width="8.2" height="8" fill="#2a9d8f" stroke="#000" stroke-width="1"/>
<circle cx="70.8" cy="238.4" r="4.3" fill="#2a9d8f" stroke="#000" stroke-width="1"/>
<path d="M66.6 238.4 H70.8 V242.6" fill="none" stroke="#000" stroke-width="1"/>
</g><rect x="6" y="677" width="257" height="16" fill="#f0f0f0"/><rect x="23" y="677" width="142" height="15" fill="#cdcdcd"/><path d="M16.6 681.2 L12.2 684.7 L16.6 688.2" fill="none" stroke="#505050" stroke-width="1.8"/><path d="M251.2 681.2 L255.6 684.7 L251.2 688.2" fill="none" stroke="#505050" stroke-width="1.8"/>
<path d="M158.6 196.4 L175.8 193.2 L173 196.6 L279.8 243 L170.2 205.8 L169.2 210 Z" fill="#ff1e14"/>
</svg>
<div class="t" style="left:8px;top:6px">部件导航器</div>
<div class="t" style="left:12px;top:32px">名称</div>
<div class="t" style="left:212px;top:32px">最新</div>
<div class="t" style="left:44.4px;top:52px">历史记录模式</div>
<div class="t" style="left:44.4px;top:72px">模型视图</div>
<div class="t" style="left:60.3px;top:92px">摄像机</div>
<div class="t" style="left:44.4px;top:112px">模型历史记录</div>
<div class="t g" style="left:79px;top:132px">体 (1)</div>
<div class="t" style="left:79px;top:152px">体 (2)</div>
<div class="t" style="left:79px;top:172px">体 (3)</div>
<div class="t" style="left:79px;top:192px">拆分体 (4)</div>
<div class="t" style="left:79px;top:212px">直纹 (5)</div>
<div class="t" style="left:79px;top:232px">合并 (6)</div>
<div class="t b" style="left:79px;top:252px">合并 (7)</div>
<div class="wm"><span>UG</span>爱好者论坛<span>@zzgd</span></div>
</body></html>
